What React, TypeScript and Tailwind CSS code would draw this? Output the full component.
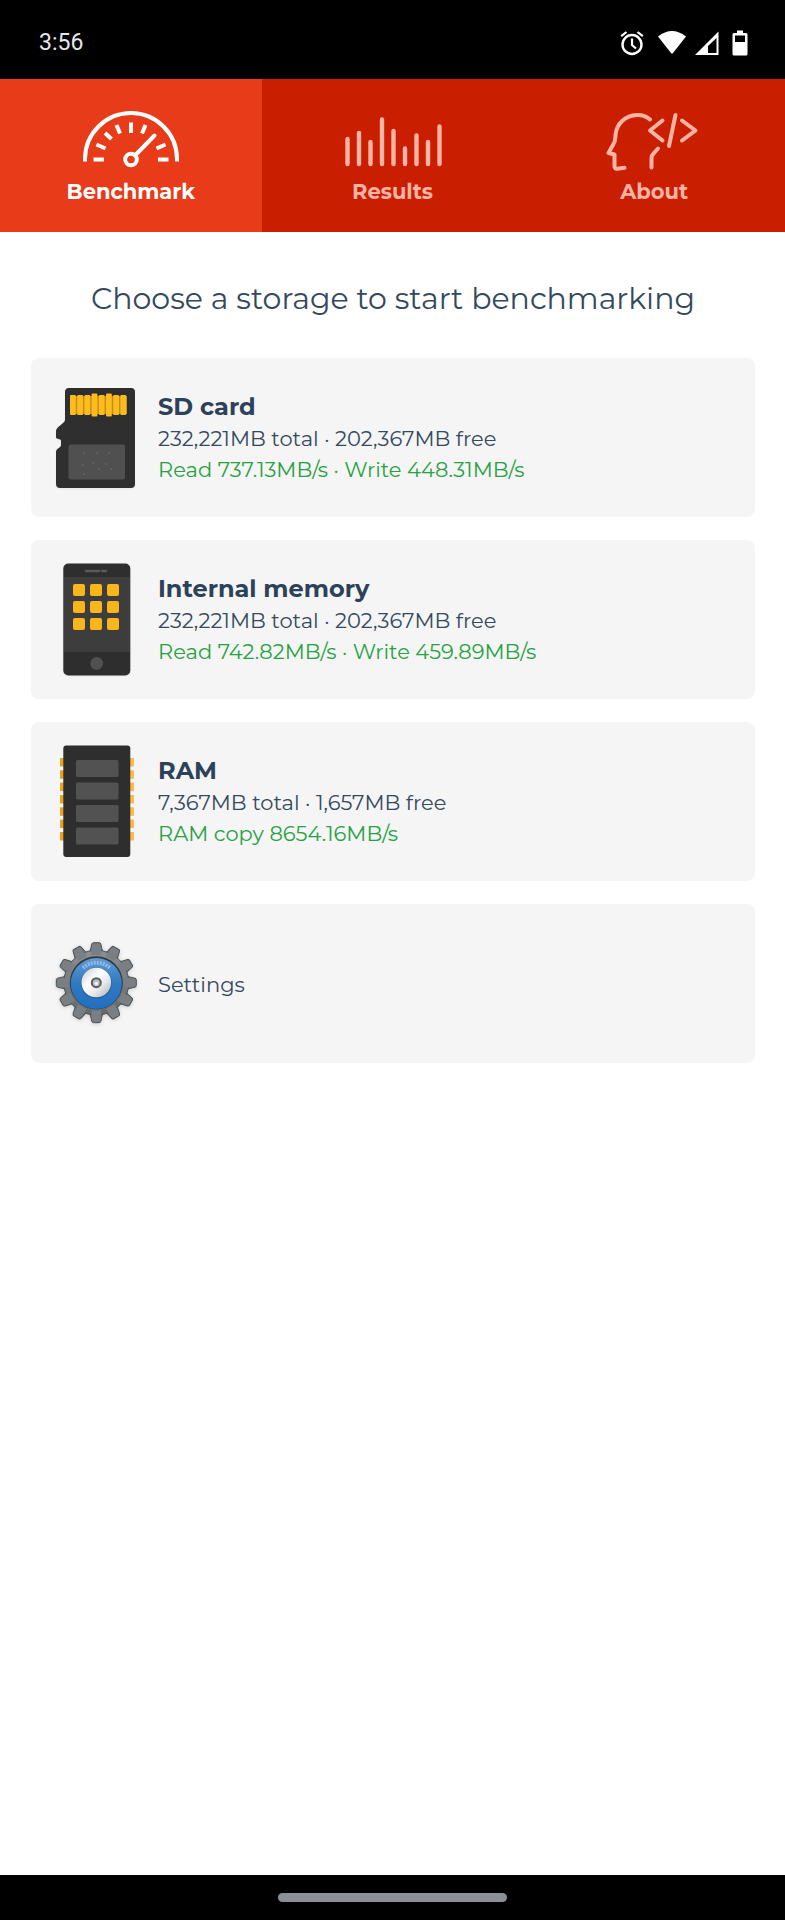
import React, { useState } from 'react';

type TabId = 'benchmark' | 'results' | 'about';

interface StorageItem {
  id: string;
  title?: string;
  info: string;
  speed?: string;
  icon: React.ReactNode;
}

const GaugeIcon = () => (
  <svg className="w-[100px] h-[62px]" viewBox="0 0 100 62" fill="none" stroke="currentColor" strokeWidth="4" aria-hidden="true">
    <path d="M4 52.5V50a46 46 0 0 1 92 0v2.5" />
    <path d="M12.5 50.5H23M77 50.5h10.500M15.500 35.500l9 4M24 24l6.500 6M35.500 16l3.500 8.500M50 13.500V24M64.500 16L61 24.500M84.500 35.500l-9 4" />
    <path d="M73.500 26.500L54 46.500" strokeLinecap="round" />
    <circle cx="50" cy="50.500" r="5.800" />
  </svg>
);

const BarsIcon = () => (
  <svg className="w-[100px] h-[62px]" viewBox="0 0 100 62" fill="none" stroke="currentColor" strokeWidth="4.400" strokeLinecap="round" aria-hidden="true">
    <path d="M5.500 30v25M17 24v31M28.500 33v22M40 10.500V55M51.500 22v33M63 39.500V55M74.500 26.500V55M86 33v22M97.500 17.500V55" />
  </svg>
);

const HeadCodeIcon = () => (
  <svg className="w-[100px] h-[62px]" viewBox="0 0 100 62" fill="none" stroke="currentColor" strokeWidth="4" strokeLinecap="round" strokeLinejoin="round" aria-hidden="true">
    <path d="M46 10.500C42 7 38 5.800 33 6C21 6.500 12.500 15 11.500 26C11.200 30 11.500 32 9.500 35L4.500 44l6 1.500V57c0 2 1 3 3 2.800l7-1" />
    <path d="M54 39.500l-4 4.500c-1.700 1.600-2.500 3-2.500 5v9.500" />
    <path d="M58.500 11.500L46 21.500l12.500 10M71.500 6L65 37M78 11.500l13.500 10L78 31.500" />
  </svg>
);

const SdCardIcon = () => (
  <svg className="w-[90px] h-[114px] shrink-0" viewBox="0 0 90 114" aria-hidden="true">
    <path
      d="M19 7h62a4 4 0 0 1 4 4v92a4 4 0 0 1-4 4H10a4 4 0 0 1-4-4V71c0-4 5-4 5-7v-4c0-3-5-1-5-4v-6c0-4 9-8 9-11V11a4 4 0 0 1 4-4z"
      fill="#2f2f2f"
      className="drop-shadow-xs"
    />
    <rect x="20" y="15" width="57" height="18" fill="#c98a10" />
    {[20, 27.2, 34.4, 41.600, 48.800, 56, 63.200, 70.400].map((x, i) => (
      <rect
        key={x}
        x={x}
        y={i === 3 || i === 5 ? 12.500 : 14}
        width="5.800"
        height={i === 3 || i === 5 ? 23 : 20}
        rx="1"
        fill="#fbbc1f"
      />
    ))}
    <rect x="18.500" y="63.500" width="56.500" height="35" rx="2" fill="#505050" />
    <path d="M33 72h2M46 72h2M58 72h2M32 84h2M42 82h2M55 83h2M48 88h2M60 88h2M33 93h2" stroke="#68706f" strokeWidth="1" />
  </svg>
);

const PhoneIcon = () => (
  <svg className="w-[90px] h-[114px] shrink-0" viewBox="0 0 90 114" aria-hidden="true">
    <rect x="13.300" y="0.500" width="67" height="112" rx="5" fill="#2e2e2e" className="drop-shadow-xs" />
    <rect x="14" y="14" width="66" height="75" fill="#3d3d3d" />
    <path d="M36 8h13M52 8h4" stroke="#5a5a5a" strokeWidth="2.500" strokeLinecap="round" />
    {[21, 38, 55].map(y =>
      [23, 40, 57].map(x => <rect key={`${x}-${y}`} x={x} y={y} width="12" height="12" rx="2" fill="#f9b61b" />)
    )}
    <circle cx="46.700" cy="100.500" r="6.400" fill="#505050" />
  </svg>
);

const RamIcon = () => (
  <svg className="w-[90px] h-[114px] shrink-0" viewBox="0 0 90 114" aria-hidden="true">
    {[13, 25.300, 37.600, 50, 62.300, 74.600, 87].map(y => (
      <g key={y}>
        <rect x="10" y={y} width="6" height="8.500" fill="#eba31c" />
        <rect x="78" y={y} width="6" height="8.500" fill="#fdb94a" />
      </g>
    ))}
    <rect x="13.300" y="0.500" width="67" height="111.500" rx="3" fill="#2e2e2e" />
    {[15, 37.500, 60, 82.500].map(y => (
      <rect key={y} x="26" y={y} width="42.500" height="17" rx="1.500" fill="#525252" />
    ))}
  </svg>
);

const GearIcon = () => (
  <svg className="w-[90px] h-[114px] shrink-0" viewBox="0 0 90 114" aria-hidden="true">
    <defs>
      <linearGradient id="gearMetal" x1="0" y1="0" x2="0" y2="1">
        <stop offset="0" stopColor="#8a9094" />
        <stop offset="1" stopColor="#63686b" />
      </linearGradient>
      <linearGradient id="gearBlue" x1="0" y1="0" x2="0" y2="1">
        <stop offset="0" stopColor="#5f9bd5" />
        <stop offset="0.500" stopColor="#3079c2" />
        <stop offset="1" stopColor="#1f70c0" />
      </linearGradient>
      <linearGradient id="gearHub" x1="0" y1="0" x2="1" y2="1">
        <stop offset="0" stopColor="#c4c8cb" />
        <stop offset="0.400" stopColor="#ffffff" />
        <stop offset="0.650" stopColor="#e6e8ea" />
        <stop offset="1" stopColor="#a9adb0" />
      </linearGradient>
    </defs>
    <g className="drop-shadow-sm" fill="#797f83" stroke="#4b5053" strokeWidth="1" strokeLinejoin="round">
      {[0, 30, 60, 90, 120, 150, 180, 210, 240, 270, 300, 330].map(a => (
        <path key={a} d="M39.500 27l2.300-10q.4-1.300 1.600-1.300h5.800q1.200 0 1.600 1.300L53.100 27z" transform={`rotate(${a} 46.3 55.7)`} />
      ))}
      <circle cx="46.300" cy="55.700" r="32.500" fill="url(#gearMetal)" />
    </g>
    <g fill="#797f83">
      {[0, 30, 60, 90, 120, 150, 180, 210, 240, 270, 300, 330].map(a => (
        <rect key={a} x="41.500" y="22" width="9.600" height="6" transform={`rotate(${a} 46.3 55.7)`} />
      ))}
    </g>
    <circle cx="46.300" cy="55.700" r="26.500" fill="#34383b" />
    <circle cx="46.300" cy="56.500" r="25.500" fill="url(#gearBlue)" />
    <path d="M33 41a20 20 0 0 1 27 0" fill="none" stroke="#8fbbe4" strokeWidth="4" strokeDasharray="2 1" />
    <circle cx="46.300" cy="56" r="15.500" fill="#2b5f94" />
    <circle cx="46.300" cy="55.500" r="14.800" fill="url(#gearHub)" />
    <circle cx="46.300" cy="55.700" r="4.500" fill="#b9bdbf" stroke="#5a5e61" strokeWidth="2" />
    <circle cx="46.300" cy="56.500" r="1.800" fill="#f4f4f4" />
  </svg>
);

const StatusIcons = () => (
  <div className="flex items-center text-white">
    <svg className="w-6 h-[26px] mr-[14px]" viewBox="0 0 24 26" fill="none" stroke="currentColor" strokeWidth="2.200" aria-label="Alarm" role="img">
      <circle cx="12" cy="14.500" r="9.500" strokeWidth="2.400" />
      <path d="M12 8.500V15l4 3.500M1.200 6.200L6.500 2M22.800 6.200L17.500 2" />
    </svg>
    <svg className="w-7 h-[26px] mr-[9px]" viewBox="0 0 28 26" fill="currentColor" aria-label="Wi-Fi" role="img">
      <path d="M0 6.500Q14-4.500 28 6.500L15 23q-1 1.200-2 0z" />
    </svg>
    <svg className="w-6 h-[26px] mr-[13px]" viewBox="0 0 24 26" fill="currentColor" fillRule="evenodd" aria-label="Signal" role="img">
      <path d="M23.500 1.500V25H0zM21.500 8L13 16v7h8.500z" />
    </svg>
    <svg className="w-4 h-[26px]" viewBox="0 0 16 26" fill="currentColor" fillRule="evenodd" aria-label="Battery" role="img">
      <path d="M5 0.500h6V3h3q1.500 0 1.500 1.500v19.500q0 1.500-1.500 1.500H2Q.5 25.500.5 24V4.500Q.5 3 2 3h3zM3 5.500V12h10V5.500z" />
    </svg>
  </div>
);

const tabs: { id: TabId; label: string; icon: React.ReactNode }[] = [
  { id: 'benchmark', label: 'Benchmark', icon: <GaugeIcon /> },
  { id: 'results', label: 'Results', icon: <BarsIcon /> },
  { id: 'about', label: 'About', icon: <HeadCodeIcon /> }
];

const storages: StorageItem[] = [
  {
    id: 'sd',
    title: 'SD card',
    info: '232,221MB total · 202,367MB free',
    speed: 'Read 737.13MB/s · Write 448.31MB/s',
    icon: <SdCardIcon />
  },
  {
    id: 'internal',
    title: 'Internal memory',
    info: '232,221MB total · 202,367MB free',
    speed: 'Read 742.82MB/s · Write 459.89MB/s',
    icon: <PhoneIcon />
  },
  {
    id: 'ram',
    title: 'RAM',
    info: '7,367MB total · 1,657MB free',
    speed: 'RAM copy 8654.16MB/s',
    icon: <RamIcon />
  },
  { id: 'settings', info: 'Settings', icon: <GearIcon /> }
];

export default function App() {
  const [activeTab, setActiveTab] = useState<TabId>('benchmark');

  return (
    <div className="min-h-screen flex flex-col bg-white font-['Montserrat','Inter',sans-serif] text-[#34495e]">
      {/* Status bar */}
      <header className="bg-black pl-[39px] pr-[37px] pt-[30px] pb-[23px] flex items-center justify-between">
        <span className="font-['Roboto',sans-serif] text-[23px] leading-[26px] text-gray-200">3:56</span>
        <StatusIcons />
      </header>

      {/* Tabs */}
      <nav className="grid grid-cols-3 bg-[#c91f00]">
        {tabs.map(tab => (
          <button
            key={tab.id}
            type="button"
            onClick={() => setActiveTab(tab.id)}
            className={`flex flex-col items-center gap-[7px] pt-[30px] pb-[26px] ${
              activeTab === tab.id ? 'bg-[#e73b1a] text-white' : 'text-[#ffb3a5]'
            }`}
          >
            {tab.icon}
            <span className="text-[21px] leading-7 font-bold">{tab.label}</span>
          </button>
        ))}
      </nav>

      <main className="flex-1 pl-[31px] pr-[30px]">
        <h1 className="pt-[47px] pb-[39px] text-[30px] leading-10 text-center">Choose a storage to start benchmarking</h1>
        <div className="flex flex-col gap-[23px]">
          {storages.map(item => (
            <button
              key={item.id}
              type="button"
              className="w-full flex items-center gap-[18px] pl-[19px] pr-5 pt-[23px] pb-[22px] rounded-lg bg-[#f5f5f5] text-left"
            >
              {item.icon}
              <span className="flex flex-col">
                {item.title && <span className="text-[24px] leading-8 font-bold text-[#2c4258]">{item.title}</span>}
                <span className="text-[21px] leading-[31px]">{item.info}</span>
                {item.speed && <span className="text-[21px] leading-[31px] text-[#27a143]">{item.speed}</span>}
              </span>
            </button>
          ))}
        </div>
      </main>

      {/* Gesture bar */}
      <footer className="bg-black pt-[18px] pb-[18px] flex justify-center">
        <div className="w-[229px] h-[9px] rounded-full bg-[#8b8f96]" />
      </footer>
    </div>
  );
}
